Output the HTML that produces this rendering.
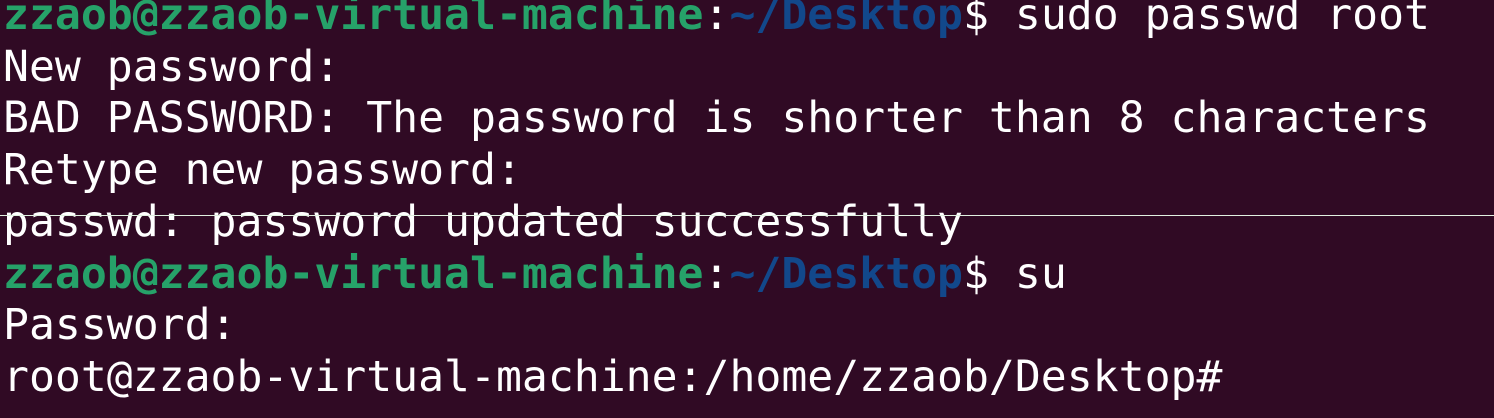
<!DOCTYPE html>
<html><head><style>
html,body{margin:0;padding:0;width:1494px;height:418px;overflow:hidden;background:#300a24;}
pre{position:absolute;left:3px;top:-10px;margin:0;font-family:"DejaVu Sans Mono","Liberation Mono",monospace;font-size:43.1px;line-height:51.7px;color:#fff;}
.g{color:#26a269;font-weight:bold}.b{color:#12488b;font-weight:bold}
.line{position:absolute;left:0;top:215px;width:1494px;height:1px;background:#e0f0e0;}
</style></head><body>
<pre><span class="g">zzaob@zzaob-virtual-machine</span>:<span class="b">~/Desktop</span>$ sudo passwd root
New password:
BAD PASSWORD: The password is shorter than 8 characters
Retype new password:
passwd: password updated successfully
<span class="g">zzaob@zzaob-virtual-machine</span>:<span class="b">~/Desktop</span>$ su
Password:
root@zzaob-virtual-machine:/home/zzaob/Desktop#</pre>
<div class="line"></div>
</body></html>
